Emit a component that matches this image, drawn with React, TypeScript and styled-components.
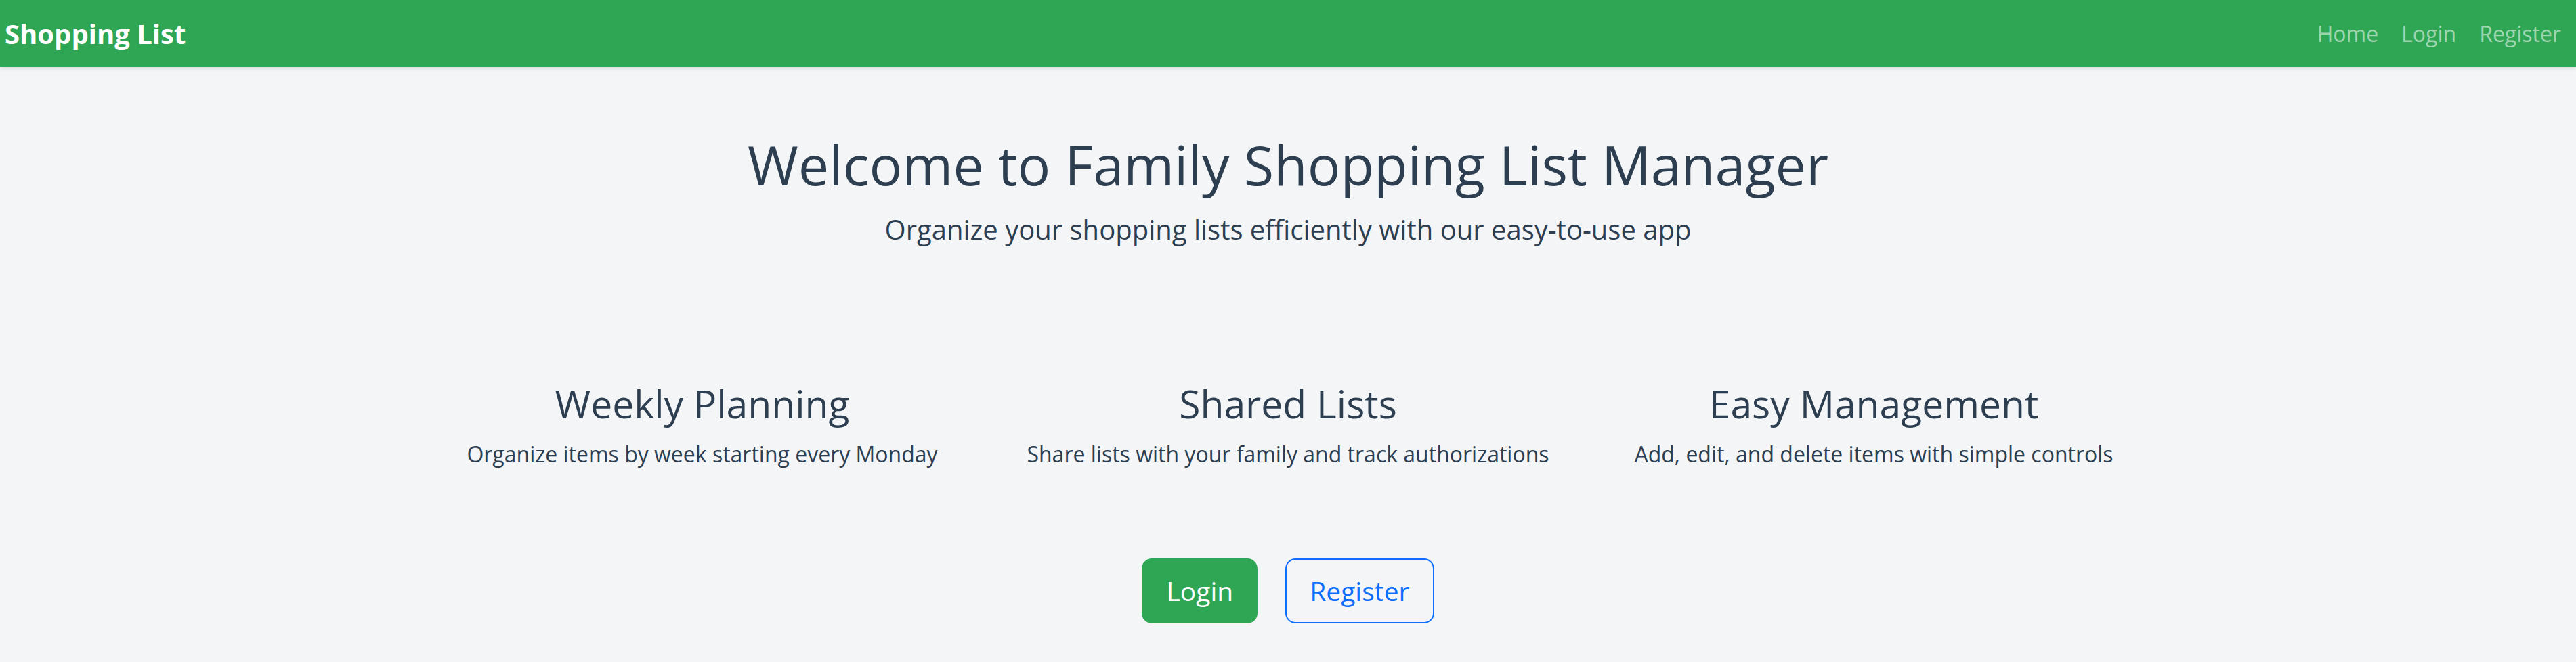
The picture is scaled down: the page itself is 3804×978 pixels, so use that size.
import styled, { createGlobalStyle } from "styled-components"

const GlobalStyle = createGlobalStyle`
  html, body {
    margin: 0;
    padding: 0;
    background: #f4f5f7;
  }

  body {
    color: #2c3e50;
    font-family: "Open Sans", Lato, sans-serif;
  }

  * {
    box-sizing: border-box;
  }
`

const Navbar = styled.nav`
  align-items: center;
  background: #2ea654;
  box-shadow: 0 2px 6px rgba(0, 0, 0, 0.12);
  display: flex;
  height: 99px;
  justify-content: space-between;
  padding: 0 22px 0 7px;
`

const Brand = styled.a`
  color: #fff;
  font-size: 40px;
  font-weight: 700;
  text-decoration: none;
`

const NavLinks = styled.div`
  display: flex;
  gap: 34px;
`

const NavLink = styled.a`
  color: rgba(255, 255, 255, 0.55);
  font-size: 32px;
  text-decoration: none;
`

const Main = styled.main`
  display: flex;
  flex-direction: column;
  align-items: center;
  padding-top: 95px;
`

const Title = styled.h1`
  font-size: 81px;
  font-weight: 400;
  line-height: 1.2;
  margin: 0;
`

const Lead = styled.p`
  font-size: 40px;
  font-weight: 400;
  line-height: 1.2;
  margin: 24px 0 0;
`

const Features = styled.section`
  display: grid;
  grid-template-columns: repeat(3, 865px);
  margin-top: 199px;
`

const Feature = styled.div`
  display: flex;
  flex-direction: column;
  align-items: center;
  text-align: center;
`

const FeatureTitle = styled.h3`
  font-size: 57px;
  font-weight: 400;
  line-height: 1.2;
  margin: 0;
`

const FeatureText = styled.p`
  font-size: 32px;
  line-height: 1.2;
  margin: 21px 0 0;
`

const Actions = styled.div`
  display: flex;
  gap: 41px;
  margin-top: 135px;
`

const Button = styled.a<{ $variant: "solid" | "outline" }>`
  border: 2px solid ${(props) => (props.$variant === "solid" ? "#2ea654" : "#0d6efd")};
  background: ${(props) => (props.$variant === "solid" ? "#2ea654" : "transparent")};
  border-radius: 15px;
  color: ${(props) => (props.$variant === "solid" ? "#fff" : "#0d6efd")};
  font-size: 39px;
  line-height: 1.5;
  padding: 17px 34px;
  text-decoration: none;
`

const features = [
  {
    title: "Weekly Planning",
    text: "Organize items by week starting every Monday",
  },
  {
    title: "Shared Lists",
    text: "Share lists with your family and track authorizations",
  },
  {
    title: "Easy Management",
    text: "Add, edit, and delete items with simple controls",
  },
]

export default function App() {
  return (
    <>
      <GlobalStyle />
      <Navbar>
        <Brand href="#">Shopping List</Brand>
        <NavLinks>
          <NavLink href="#">Home</NavLink>
          <NavLink href="#">Login</NavLink>
          <NavLink href="#">Register</NavLink>
        </NavLinks>
      </Navbar>
      <Main>
        <Title>Welcome to Family Shopping List Manager</Title>
        <Lead>Organize your shopping lists efficiently with our easy-to-use app</Lead>
        <Features>
          {features.map((feature) => (
            <Feature key={feature.title}>
              <FeatureTitle>{feature.title}</FeatureTitle>
              <FeatureText>{feature.text}</FeatureText>
            </Feature>
          ))}
        </Features>
        <Actions>
          <Button $variant="solid" href="#">
            Login
          </Button>
          <Button $variant="outline" href="#">
            Register
          </Button>
        </Actions>
      </Main>
    </>
  )
}
